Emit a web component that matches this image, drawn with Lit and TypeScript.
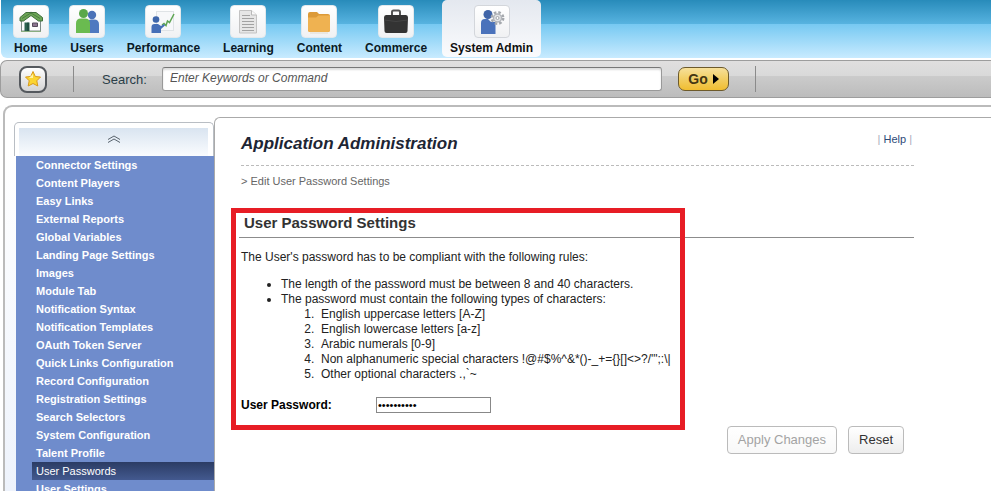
import { LitElement, html, svg, css } from "lit";
import { customElement, property, state } from "lit/decorators.js";
import { classMap } from "lit/directives/class-map.js";

const icons: Record<string, unknown> = {
  home: svg`
    <path d="M4.500 11v12h19V11L14 4z" fill="#fdfdfd" stroke="#7d8a86"/>
    <path d="M3 9.500 9 4.500h10l6.500 5v3.500h-4L14 7.500 6.500 13H3z" fill="#6da556" stroke="#416f3c"/>
    <path d="M5 10.500 14 5l9 5.500" fill="none" stroke="#4b7d42"/>
    <path d="M7.500 14.500h5V23h-5z" fill="#2c6350"/><path d="M10.500 14.500h1V23h-1z" fill="#173f33"/>
    <path d="M15.500 15h5v3.500h-5z" fill="#8d7590" stroke="#574c5c"/>
    <path d="M4 23.500h20" stroke="#89ad80"/>`,
  users: svg`
    <circle cx="19" cy="7" r="4.200" fill="#4a72b8"/>
    <path d="M15 25V14q0-2.500 3-2.500h3q5 0 5 5V25z" fill="#4f79c0"/>
    <circle cx="10.500" cy="5.500" r="4.500" fill="#59a84a"/>
    <path d="M3 25V15.500q0-5 5-5h4q5 0 5 5V25z" fill="#6abb50"/>`,
  performance: svg`
    <rect x="7.500" y="3.500" width="17" height="19" fill="#f7f8fa" stroke="#dfe3e6"/>
    <path d="M13 17l2-1.500 2 2 1.500-4.500 2 1.500L25 6" fill="none" stroke="#5fa653" stroke-width="1.500"/>
    <circle cx="7" cy="11.500" r="3.300" fill="#3e66ab"/>
    <path d="M2.500 25v-6q0-3 3-3h3.500l3 2 3-2 1 1.500-4 3.500v4z" fill="#466fb7"/>`,
  learning: svg`
    <path d="M5.500 2.500h12l5 4.500v18h-17z" fill="#e6e6e6" stroke="#c3c3c3"/>
    <path d="M17.500 2.500V7h5" fill="#fafafa" stroke="#b9b9b9"/>
    <path d="M8 7.500h8M8 10.500h12M8 13.500h12M8 16.500h12M8 19.500h12M8 22.500h12" stroke="#a2a2a2"/>`,
  content: svg`
    <path d="M3 6q0-2 2-2h7l2 2h9q2 0 2 2v14q0 2-2 2H5q-2 0-2-2z" fill="#dc9a38"/>
    <path d="M3 9.500h8l2.500-2H25V22q0 2-2 2H5q-2 0-2-2z" fill="#efb251"/>
    <path d="M5 25h18" stroke="#e4dccd"/>`,
  commerce: svg`
    <path d="M10 8V4q0-1.500 1.500-1.500h5Q18 2.500 18 4v4" fill="none" stroke="#555" stroke-width="2"/>
    <path d="M2 9.500Q2 7 4 7h20q2 0 2 2.500L25.500 23q0 2-2 2h-19q-2 0-2-2z" fill="#333"/>
    <path d="M2.300 12q11.700 3 23.400 0" fill="none" stroke="#444"/>`,
  admin: svg`
    <circle cx="10" cy="6.500" r="4.500" fill="#3f64a8"/>
    <path d="M3 26V15q0-4 4-4h3l3 3h4.500v12z" fill="#4a72bb"/>
    <circle cx="19.500" cy="10" r="5.700" fill="none" stroke="#a4a8ad" stroke-width="2.500" stroke-dasharray="2.500 2"/>
    <circle cx="19.500" cy="10" r="4" fill="#e4e6e8" stroke="#b2b5ba" stroke-width="1.500"/>
    <circle cx="19.500" cy="10" r="1.500" fill="#fff" stroke="#a2a5aa"/>`,
};

@customElement("nav-tab")
class NavTab extends LitElement {
  @property() icon = "";
  @property() label = "";
  @property({ type: Boolean }) active = false;

  static styles = css`
    :host { display: block; }
    .tab {
      display: flex; flex-direction: column; align-items: center; gap: 2px;
      box-sizing: border-box; height: 57px; padding: 5px 8px 0;
      border-radius: 5px; color: #0a1a26; text-decoration: none;
      font: bold 12px/16px "Liberation Sans", Arial, sans-serif; white-space: nowrap;
    }
    .active { background: linear-gradient(#e4e8ef, #fafbfd); color: #111; }
    .tile {
      display: flex; align-items: center; justify-content: center;
      box-sizing: border-box; width: 36px; height: 33px; margin: 0 -4px;
      border: 1px solid #e3e9ed; border-radius: 4px;
      background: linear-gradient(#fff, #f0f1f3);
    }
    .active .tile { border-color: #d3d6db; }
  `;

  render() {
    return html`<a href="#" class=${classMap({ tab: true, active: this.active })}>
      <span class="tile"><svg width="28" height="28" viewBox="0 0 28 28" aria-hidden="true">${icons[this.icon]}</svg></span>
      <span>${this.label}</span>
    </a>`;
  }
}

@customElement("side-menu")
class SideMenu extends LitElement {
  @property({ attribute: false }) items: string[] = [];
  @property() current = "";

  static styles = css`
    :host {
      display: flex; flex-direction: column; min-height: 0;
      font: bold 11px/18px "Liberation Sans", Arial, sans-serif;
    }
    .head {
      flex: none; height: 34px; padding: 5px 5px 0 4px; box-sizing: border-box;
      border: 1px solid #b9bec4; border-width: 1px 1px 0; border-radius: 5px 5px 0 0;
      background: #fff;
    }
    .up {
      display: flex; align-items: center; justify-content: center;
      width: 100%; height: 28px; padding: 0 0 6px; border: 0;
      background: linear-gradient(#d9e4f0, #fafcfe);
    }
    .list {
      flex: 1; min-height: 0; overflow: auto; scrollbar-width: none;
      margin: 0 0 0 2px; padding: 0; list-style: none; background: #6f8ccc;
    }
    .item { display: block; margin-left: 16px; padding-left: 4px; color: #fff; text-decoration: none; }
    .current { background: linear-gradient(#2b3c64, #43598f); font-weight: normal; }
  `;

  render() {
    return html`
      <div class="head">
        <button class="up" aria-label="Scroll up">
          <svg width="14" height="8" viewBox="0 0 14 8" fill="none" stroke="#59636d"><path d="M1 4.500 7 1l6 3.500M1 7.500 7 4l6 3.500"/></svg>
        </button>
      </div>
      <ul class="list">
        ${this.items.map((name) => html`<li><a href="#" class=${classMap({ item: true, current: name === this.current })}>${name}</a></li>`)}
      </ul>`;
  }
}

@customElement("app-root")
class AppRoot extends LitElement {
  @state() private password = "passphrase";

  private tabs = [
    ["home", "Home"], ["users", "Users"], ["performance", "Performance"], ["learning", "Learning"],
    ["content", "Content"], ["commerce", "Commerce"], ["admin", "System Admin"],
  ];

  private menu = [
    "Connector Settings", "Content Players", "Easy Links", "External Reports", "Global Variables",
    "Landing Page Settings", "Images", "Module Tab", "Notification Syntax", "Notification Templates",
    "OAuth Token Server", "Quick Links Configuration", "Record Configuration", "Registration Settings",
    "Search Selectors", "System Configuration", "Talent Profile", "User Passwords", "User Settings",
  ];

  static styles = css`
    :host {
      display: flex; flex-direction: column; height: 100vh; overflow: hidden; background: #fff;
      font: 12px/15px "Liberation Sans", Arial, sans-serif; color: #222;
    }
    .nav {
      flex: none; display: flex; gap: 7px; height: 58px; padding-left: 5px; margin-left: 1px;
      border-bottom-left-radius: 6px;
      background: linear-gradient(#288bba, #57b3e0 41%, #77c9f2 42%, #c8ebff);
    }
    .bar {
      flex: none; display: flex; align-items: center; box-sizing: border-box; height: 38px; margin-top: 2px;
      padding-left: 18px; border: 1px solid #9d9d9d; border-right: 0; border-radius: 7px 0 0 7px;
      background: linear-gradient(#e0dfdf, #d9d9d9 42%, #cbcbcb 43%, #bcbcbc);
    }
    .star {
      display: flex; align-items: center; justify-content: center; box-sizing: border-box;
      width: 28px; height: 27px; padding: 0; border: 2px solid #55595e; border-radius: 8px;
      background: linear-gradient(#fff, #e9e9e9 50%, #d4d4d4);
    }
    .rule { width: 1px; height: 26px; margin: 0 28px 0 26px; background: #8b8b8b; }
    .search-label { width: 60px; font-size: 13px; color: #2a3e48; }
    .search {
      box-sizing: border-box; width: 500px; height: 24px; padding: 0 7px 2px; border: 1px solid #999;
      border-top-color: #777; border-radius: 3px; background: #fff; box-shadow: inset 0 2px 2px #ddd;
      font: italic 12px/20px "Liberation Sans", Arial, sans-serif; color: #555;
    }
    .search::placeholder { color: #555; opacity: 1; }
    .go {
      display: flex; align-items: center; justify-content: center; gap: 5px; box-sizing: border-box;
      width: 51px; height: 24px; margin-left: 16px; padding: 0; border: 1px solid #6d5a2b; border-radius: 7px;
      background: linear-gradient(#f7e09a, #f2ce63 50%, #f0bd31);
      font: bold 14px/20px "Liberation Sans", Arial, sans-serif; color: #443612;
    }
    .frame {
      flex: 1; min-height: 0; display: flex; margin: 7px 0 0 3px; padding: 10px 0 0 9px;
      border: 2px solid #bbb; border-width: 2px 0 0 2px; border-radius: 9px 0 0 0;
      background: linear-gradient(#fff, #fff 40px, #eef3fc);
    }
    .side { flex: none; width: 200px; margin-top: 5px; }
    .page {
      flex: 1; min-width: 0; padding: 16px 77px 0 26px; border: 1px solid #aaa; border-width: 1px 0 0 1px;
      border-radius: 6px 0 0 0; background: #fff;
    }
    .top { display: flex; align-items: flex-start; justify-content: space-between; height: 31px; border-bottom: 1px dashed #bbb; }
    .title { margin: 0; font: italic bold 17px/20px "Liberation Sans", Arial, sans-serif; color: #1d2534; }
    .help { padding-right: 2px; font-size: 11px; line-height: 11px; color: #aab; }
    .help-link { color: #2d4a78; text-decoration: none; }
    .crumb { margin: 8px 0 0; font-size: 11px; color: #666; }
    .section { position: relative; margin: 25px 0 0; }
    .mark {
      position: absolute; top: -6px; left: -10px; width: 444px; bottom: -17px;
      border: 5px solid #e71d25; pointer-events: none;
    }
    .heading {
      margin: 0 0 0 -2px; padding: 0 0 5px 5px; border-bottom: 1px solid #8c8c8c;
      font: bold 15px/18px "Liberation Sans", Arial, sans-serif; color: #333;
    }
    .rules { margin: 12px 0; }
    .outer, .inner { margin: 0; padding-left: 40px; }
    .inner > li::marker { content: counter(list-item) ". \\00a0"; }
    .field { display: flex; align-items: center; margin-top: 15px; color: #000; }
    .field-label { width: 135px; font-weight: bold; }
    .pass {
      box-sizing: border-box; width: 115px; height: 16px; padding: 0 1px; border: 1px solid #888;
      background: #fff; font: 11px/14px "Liberation Sans", Arial, sans-serif; color: #000;
    }
    .actions { display: flex; justify-content: flex-end; gap: 11px; margin: 13px 10px 0 0; }
    .button {
      box-sizing: border-box; height: 28px; padding: 0 10px; border: 1px solid #bbb; border-radius: 4px;
      background: linear-gradient(#fff, #ededed); font: 13px/18px "Liberation Sans", Arial, sans-serif; color: #333;
    }
    .button:disabled { background: linear-gradient(#fff, #f8f8f8); color: #a3a3a3; }
  `;

  render() {
    return html`
      <nav class="nav">
        ${this.tabs.map(([icon, label]) => html`<nav-tab icon=${icon} label=${label} ?active=${icon === "admin"}></nav-tab>`)}
      </nav>
      <div class="bar">
        <button class="star" aria-label="Favorites">
          <svg width="18" height="18" viewBox="0 0 18 18"><path d="M9 1.500 11.300 6.500 16.500 7 12.800 10.800 13.800 16 9 13.500 4.200 16 5.200 10.800 1.500 7 6.700 6.500z" fill="#fbd532" stroke="#d99a1c" stroke-linejoin="round"/><path d="M9 4v4L5 8z" fill="#fff3a5"/></svg>
        </button>
        <span class="rule"></span>
        <label class="search-label" for="q">Search:</label>
        <input class="search" id="q" type="text" placeholder="Enter Keywords or Command">
        <button class="go">Go <svg width="6" height="10" viewBox="0 0 6 10"><path d="M0 0 6 5 0 10z" fill="#000"/></svg></button>
        <span class="rule"></span>
      </div>
      <div class="frame">
        <side-menu class="side" .items=${this.menu} current="User Passwords"></side-menu>
        <main class="page">
          <header class="top">
            <h1 class="title">Application Administration</h1>
            <div class="help">| <a class="help-link" href="#">Help</a> |</div>
          </header>
          <p class="crumb">&gt; Edit User Password Settings</p>
          <section class="section">
            <h2 class="heading">User Password Settings</h2>
            <p class="rules">The User's password has to be compliant with the following rules:</p>
            <ul class="outer">
              <li>The length of the password must be between 8 and 40 characters.</li>
              <li>The password must contain the following types of characters:
                <ol class="inner">
                  <li>English uppercase letters [A-Z]</li>
                  <li>English lowercase letters [a-z]</li>
                  <li>Arabic numerals [0-9]</li>
                  <li>Non alphanumeric special characters !@#$%^&amp;*()-_+={}[]&lt;&gt;?/'";:\\|</li>
                  <li>Other optional characters .,\`~</li>
                </ol>
              </li>
            </ul>
            <div class="field">
              <label class="field-label" for="pw">User Password:</label>
              <input class="pass" id="pw" type="password" .value=${this.password}>
            </div>
            <div class="mark"></div>
          </section>
          <div class="actions">
            <button class="button" disabled>Apply Changes</button>
            <button class="button">Reset</button>
          </div>
        </main>
      </div>`;
  }
}
